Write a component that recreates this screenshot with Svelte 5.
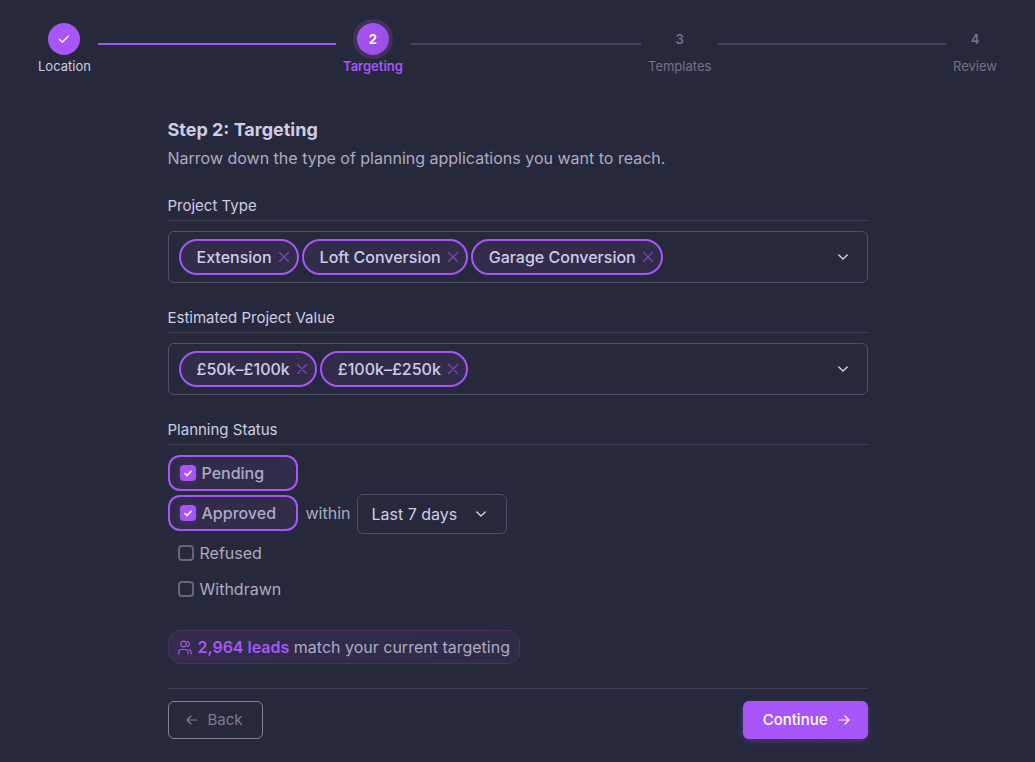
<script>
  const steps = [
    { n: 1, label: 'Location', state: 'done' },
    { n: 2, label: 'Targeting', state: 'current' },
    { n: 3, label: 'Templates', state: 'todo' },
    { n: 4, label: 'Review', state: 'todo' },
  ];

  let fields = $state([
    { id: 'project-type', label: 'Project Type', values: ['Extension', 'Loft Conversion', 'Garage Conversion'] },
    { id: 'project-value', label: 'Estimated Project Value', values: ['£50k–£100k', '£100k–£250k'] },
  ]);

  let statuses = $state([
    { name: 'Pending', checked: true },
    { name: 'Approved', checked: true },
    { name: 'Refused', checked: false },
    { name: 'Withdrawn', checked: false },
  ]);

  let period = $state('Last 7 days');

  function remove(field, value) {
    field.values = field.values.filter((v) => v !== value);
  }
</script>

{#snippet chevron()}
  <svg class="chevron" width="12" height="8" viewBox="0 0 12 8" aria-hidden="true">
    <path d="M1.800 2 6 6l4.200-4" />
  </svg>
{/snippet}

<ol class="stepper">
  {#each steps as step, i}
    <li class={step.state} aria-current={step.state === 'current' ? 'step' : undefined}>
      <div class="step">
        <span class="dot">
          {#if step.state === 'done'}
            <svg width="12" height="10" viewBox="0 0 12 10" aria-hidden="true">
              <path d="M1.500 5.500 4.200 8.200 10.500 2" />
            </svg>
          {:else}
            {step.n}
          {/if}
        </span>
        <span class="name">{step.label}</span>
      </div>
      {#if i < steps.length - 1}<span class="line"></span>{/if}
    </li>
  {/each}
</ol>

<main>
  <h1>Step 2: Targeting</h1>
  <p class="intro">Narrow down the type of planning applications you want to reach.</p>

  {#each fields as field}
    <section>
      <h2 id={field.id}>{field.label}</h2>
      <div class="multi" role="group" aria-labelledby={field.id}>
        <ul class="chips">
          {#each field.values as value}
            <li>
              {value}
              <button type="button" class="remove" aria-label={`Remove ${value}`} onclick={() => remove(field, value)}>
                <svg width="10" height="10" viewBox="0 0 10 10" aria-hidden="true">
                  <path d="M.5.5l9 9M9.500.5l-9 9" />
                </svg>
              </button>
            </li>
          {/each}
        </ul>
        <button type="button" class="open" aria-label={`Choose ${field.label}`}>{@render chevron()}</button>
      </div>
    </section>
  {/each}

  <fieldset>
    <legend>Planning Status</legend>
    {#each statuses as status}
      <div class="status">
        <label class="check" class:on={status.checked}>
          <input type="checkbox" bind:checked={status.checked} />
          {status.name}
        </label>
        {#if status.name === 'Approved'}
          <label class="within" for="period">within</label>
          <div class="select">
            <select id="period" bind:value={period}>
              <option>Last 7 days</option>
              <option>Last 14 days</option>
              <option>Last 30 days</option>
            </select>
            {@render chevron()}
          </div>
        {/if}
      </div>
    {/each}
  </fieldset>

  <div class="leads">
    <svg width="14" height="15" viewBox="0 0 14 15" aria-hidden="true">
      <circle cx="5.500" cy="4" r="2.800" />
      <path d="M.8 14v-1.700a2.800 2.800 0 0 1 2.800-2.800h3.600a2.800 2.800 0 0 1 2.800 2.800V14M9.300 1.300a2.800 2.800 0 0 1 0 5.400M13.200 14v-1.700a2.800 2.800 0 0 0-2-2.700" />
    </svg>
    <span><strong>2,964 leads</strong> match your current targeting</span>
  </div>

  <footer>
    <button type="button" class="back">
      <svg width="12" height="10" viewBox="0 0 12 10" aria-hidden="true"><path d="M11 5H1M5 1 1 5l4 4" /></svg>
      Back
    </button>
    <button type="button" class="next">
      Continue
      <svg width="12" height="10" viewBox="0 0 12 10" aria-hidden="true"><path d="M1 5h10M7 1l4 4-4 4" /></svg>
    </button>
  </footer>
</main>

<style>
  :global(body) {
    background: #26293c;
    color: #acabc1;
    font: 16px/24px Inter, 'Liberation Sans', sans-serif;
  }

  * {
    box-sizing: border-box;
  }

  ol,
  ul {
    list-style: none;
    margin: 0;
    padding: 0;
  }

  button,
  select {
    font: inherit;
    color: inherit;
    cursor: pointer;
  }

  svg {
    flex: none;
    fill: none;
    stroke: currentColor;
    stroke-width: 1.2;
    stroke-linecap: round;
    stroke-linejoin: round;
  }

  .stepper {
    display: grid;
    grid-template-columns: repeat(3, 1fr) auto;
    padding: 23px 31px 0;
  }

  .stepper li {
    display: flex;
    color: #76708a;
  }

  .step {
    display: flex;
    flex-direction: column;
    align-items: center;
    gap: 1px;
    padding: 0 7px;
    font-size: 13px;
    line-height: 20px;
  }

  .dot {
    display: grid;
    place-items: center;
    width: 32px;
    height: 32px;
    border-radius: 50%;
    font-weight: 600;
  }

  .line {
    flex: 1;
    height: 2px;
    margin-top: 20px;
    background: #44475c;
  }

  .stepper .done {
    color: #cfcce4;
  }

  .done .dot {
    background: #a855f7;
    color: #fff;
  }

  .done .line {
    background: #a855f7;
  }

  .stepper .current {
    color: #a855f7;
    font-weight: 600;
  }

  .current .dot {
    background: linear-gradient(135deg, #a855f7, #964de0);
    box-shadow: 0 0 0 4px #403259;
    color: #fff;
    font-weight: 700;
  }

  main {
    max-width: 700px;
    margin: 0 auto;
    padding: 41px 0 23px;
  }

  h1 {
    margin: 0;
    color: #cfcce4;
    font-size: 18px;
    line-height: 26px;
    font-weight: 700;
  }

  .intro {
    margin: 3px 0 25px;
  }

  h2,
  legend {
    width: 100%;
    margin: 0 0 10px;
    padding: 0 0 4px;
    border-bottom: 1px solid #3d4055;
    color: #cfcce4;
    font-size: 15px;
    line-height: 21px;
    font-weight: 400;
  }

  section {
    margin-bottom: 24px;
  }

  .multi {
    display: flex;
    align-items: center;
    justify-content: space-between;
    padding: 7px 10px;
    border: 1px solid #4f5067;
    border-radius: 6px;
  }

  .chips {
    display: flex;
    flex-wrap: wrap;
    gap: 3px;
  }

  .chips li {
    display: flex;
    align-items: center;
    gap: 7px;
    height: 36px;
    padding: 0 8px 0 16px;
    border: 2px solid #a855f7;
    border-radius: 18px;
    background: #322c4b;
    color: #cfcce4;
    font-weight: 500;
  }

  .remove,
  .open {
    display: grid;
    place-items: center;
    padding: 0;
    border: 0;
    background: none;
  }

  .remove {
    color: #7e47b9;
  }

  .open {
    width: 28px;
    height: 28px;
    color: #cfcce4;
  }

  .chevron {
    stroke-width: 1.5;
  }

  fieldset {
    display: flex;
    flex-direction: column;
    margin: 0;
    padding: 0;
    border: 0;
  }

  .status {
    display: flex;
    align-items: center;
    min-height: 36px;
  }

  .check {
    display: flex;
    align-items: center;
    gap: 6px;
    width: 130px;
    height: 36px;
    padding: 0 10px;
  }

  .check.on {
    border: 2px solid #a855f7;
    border-radius: 12px;
    background: #322c4b;
    font-weight: 500;
  }

  .check input {
    appearance: none;
    width: 16px;
    height: 16px;
    margin: 0;
    border: 2px solid #666679;
    border-radius: 4px;
  }

  .check input:checked {
    border: 0;
    background: #a855f7 url("data:image/svg+xml,%3Csvg xmlns='http://www.w3.org/2000/svg' viewBox='0 0 16 16' fill='none' stroke='white' stroke-width='1.600'%3E%3Cpath d='M4.500 8 7 10.500 11.500 6'/%3E%3C/svg%3E");
    box-shadow: 0 2px 6px #a855f733;
  }

  .within {
    padding: 0 6px 0 8px;
  }

  .select {
    display: flex;
    align-items: center;
    position: relative;
    margin: 3px 0 1px;
    color: #cfcce4;
  }

  .select select {
    appearance: none;
    width: 150px;
    height: 40px;
    padding: 0 36px 0 14px;
    border: 1px solid #4f5067;
    border-radius: 6px;
    background: #26293c;
  }

  .select .chevron {
    position: absolute;
    right: 20px;
    pointer-events: none;
  }

  .leads {
    display: flex;
    align-items: center;
    gap: 6px;
    width: fit-content;
    height: 34px;
    margin: 23px 0 24px;
    padding: 0 9px;
    border: 1px solid #46315f;
    border-radius: 12px;
    background: linear-gradient(135deg, #342c4e, #2e2b46);
  }

  .leads svg,
  strong {
    color: #a855f7;
  }

  strong {
    font-weight: 600;
  }

  footer {
    display: flex;
    justify-content: space-between;
    padding-top: 12px;
    border-top: 1px solid #3d4055;
  }

  footer button {
    display: flex;
    align-items: center;
    gap: 10px;
    height: 38px;
    border-radius: 6px;
    font-size: 15px;
  }

  .back {
    padding: 0 19px 0 17px;
    border: 1px solid #808390;
    background: none;
    color: #7f7a93;
  }

  .next {
    padding: 0 18px 0 20px;
    border: 0;
    background: #a855f7;
    box-shadow: 0 2px 6px #a855f74d;
    color: #fff;
    font-weight: 500;
  }
</style>
